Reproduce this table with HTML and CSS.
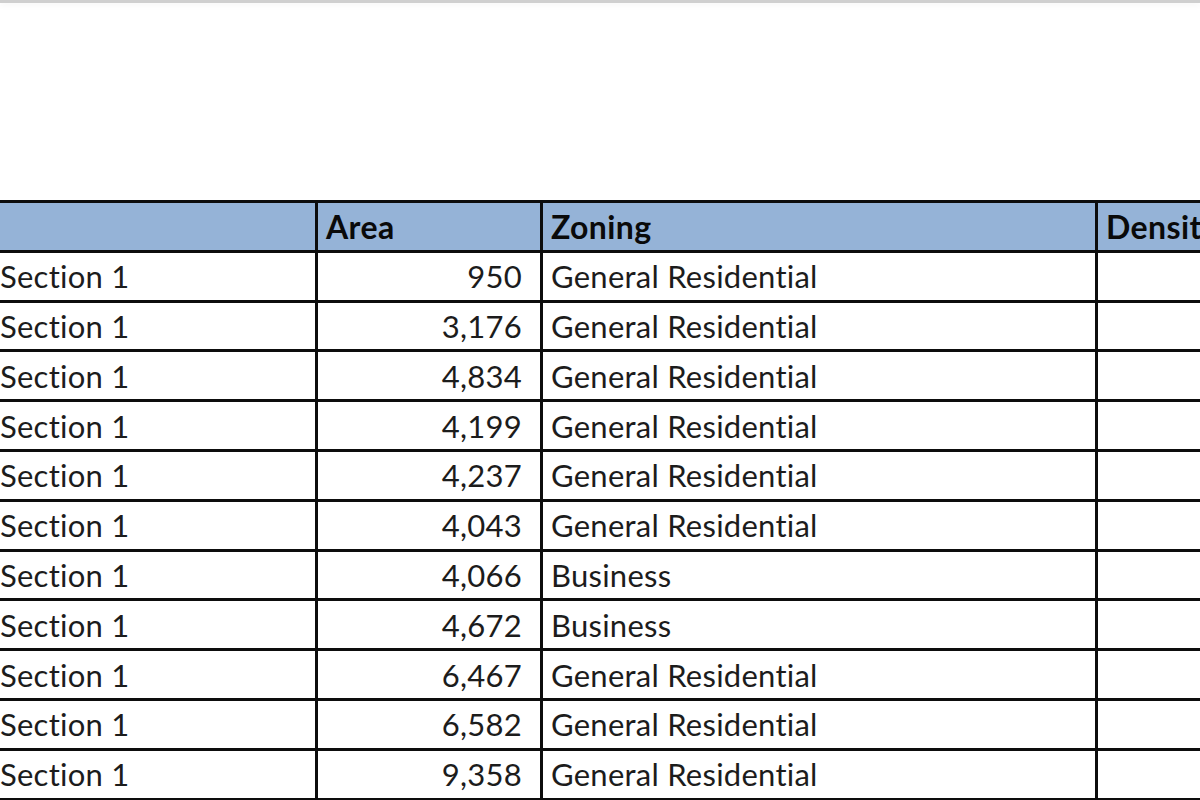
FILE: index.html
```html
<!DOCTYPE html>
<html lang="en">
<head>
<meta charset="utf-8">
<title>Parcels</title>
<link rel="stylesheet" href="styles.css">
</head>
<body>
<div class="topbar"></div>
<main class="sheet">
  <table class="grid">
    <colgroup>
      <col class="c-name">
      <col class="c-area">
      <col class="c-zone">
      <col class="c-dens">
    </colgroup>
    <thead>
      <tr>
        <th class="first"></th>
        <th>Area</th>
        <th>Zoning</th>
        <th>Density</th>
      </tr>
    </thead>
    <tbody>
      <tr><td class="first">Section 1</td><td class="num">950</td><td>General Residential</td><td></td></tr>
      <tr><td class="first">Section 1</td><td class="num">3,176</td><td>General Residential</td><td></td></tr>
      <tr><td class="first">Section 1</td><td class="num">4,834</td><td>General Residential</td><td></td></tr>
      <tr><td class="first">Section 1</td><td class="num">4,199</td><td>General Residential</td><td></td></tr>
      <tr><td class="first">Section 1</td><td class="num">4,237</td><td>General Residential</td><td></td></tr>
      <tr><td class="first">Section 1</td><td class="num">4,043</td><td>General Residential</td><td></td></tr>
      <tr><td class="first">Section 1</td><td class="num">4,066</td><td>Business</td><td></td></tr>
      <tr><td class="first">Section 1</td><td class="num">4,672</td><td>Business</td><td></td></tr>
      <tr><td class="first">Section 1</td><td class="num">6,467</td><td>General Residential</td><td></td></tr>
      <tr><td class="first">Section 1</td><td class="num">6,582</td><td>General Residential</td><td></td></tr>
      <tr><td class="first">Section 1</td><td class="num">9,358</td><td>General Residential</td><td></td></tr>
    </tbody>
  </table>
</main>
</body>
</html>
```

FILE: styles.css
```css
html, body {
  margin: 0;
  padding: 0;
  background: #ffffff;
  overflow: hidden;
  width: 1200px;
  height: 800px;
}

body {
  font-family: Lato, "Open Sans", "Liberation Sans", sans-serif;
  color: #1c1c1c;
}

.topbar {
  height: 3px;
  background: #cfcfcf;
  box-shadow: 0 2px 6px rgba(0, 0, 0, 0.06);
}

.sheet {
  padding-top: 197px;
}

.grid {
  border-collapse: separate;
  border-spacing: 0;
  table-layout: fixed;
  width: 1400px;
}

.c-name { width: 318px; }
.c-area { width: 225px; }
.c-zone { width: 555px; }
.c-dens { width: 302px; }

.grid th,
.grid td {
  box-sizing: border-box;
  border-right: 3px solid #0d0d0d;
  border-bottom: 3px solid #0d0d0d;
  padding: 0 8px;
  vertical-align: middle;
  white-space: nowrap;
  font-size: 31px;
  line-height: 38px;
  letter-spacing: 0.25px;
  text-align: left;
}

.grid th {
  border-top: 3px solid #0d0d0d;
  background: #95b3d7;
  font-weight: 700;
  font-size: 32px;
  letter-spacing: 0.4px;
  color: #0a0a0a;
  height: 52.8px;
  padding-top: 2px;
}

.grid td {
  height: 49.8px;
}

.grid .first {
  padding-left: 0;
}

.grid td.num {
  text-align: right;
  padding-right: 18px;
}
```
